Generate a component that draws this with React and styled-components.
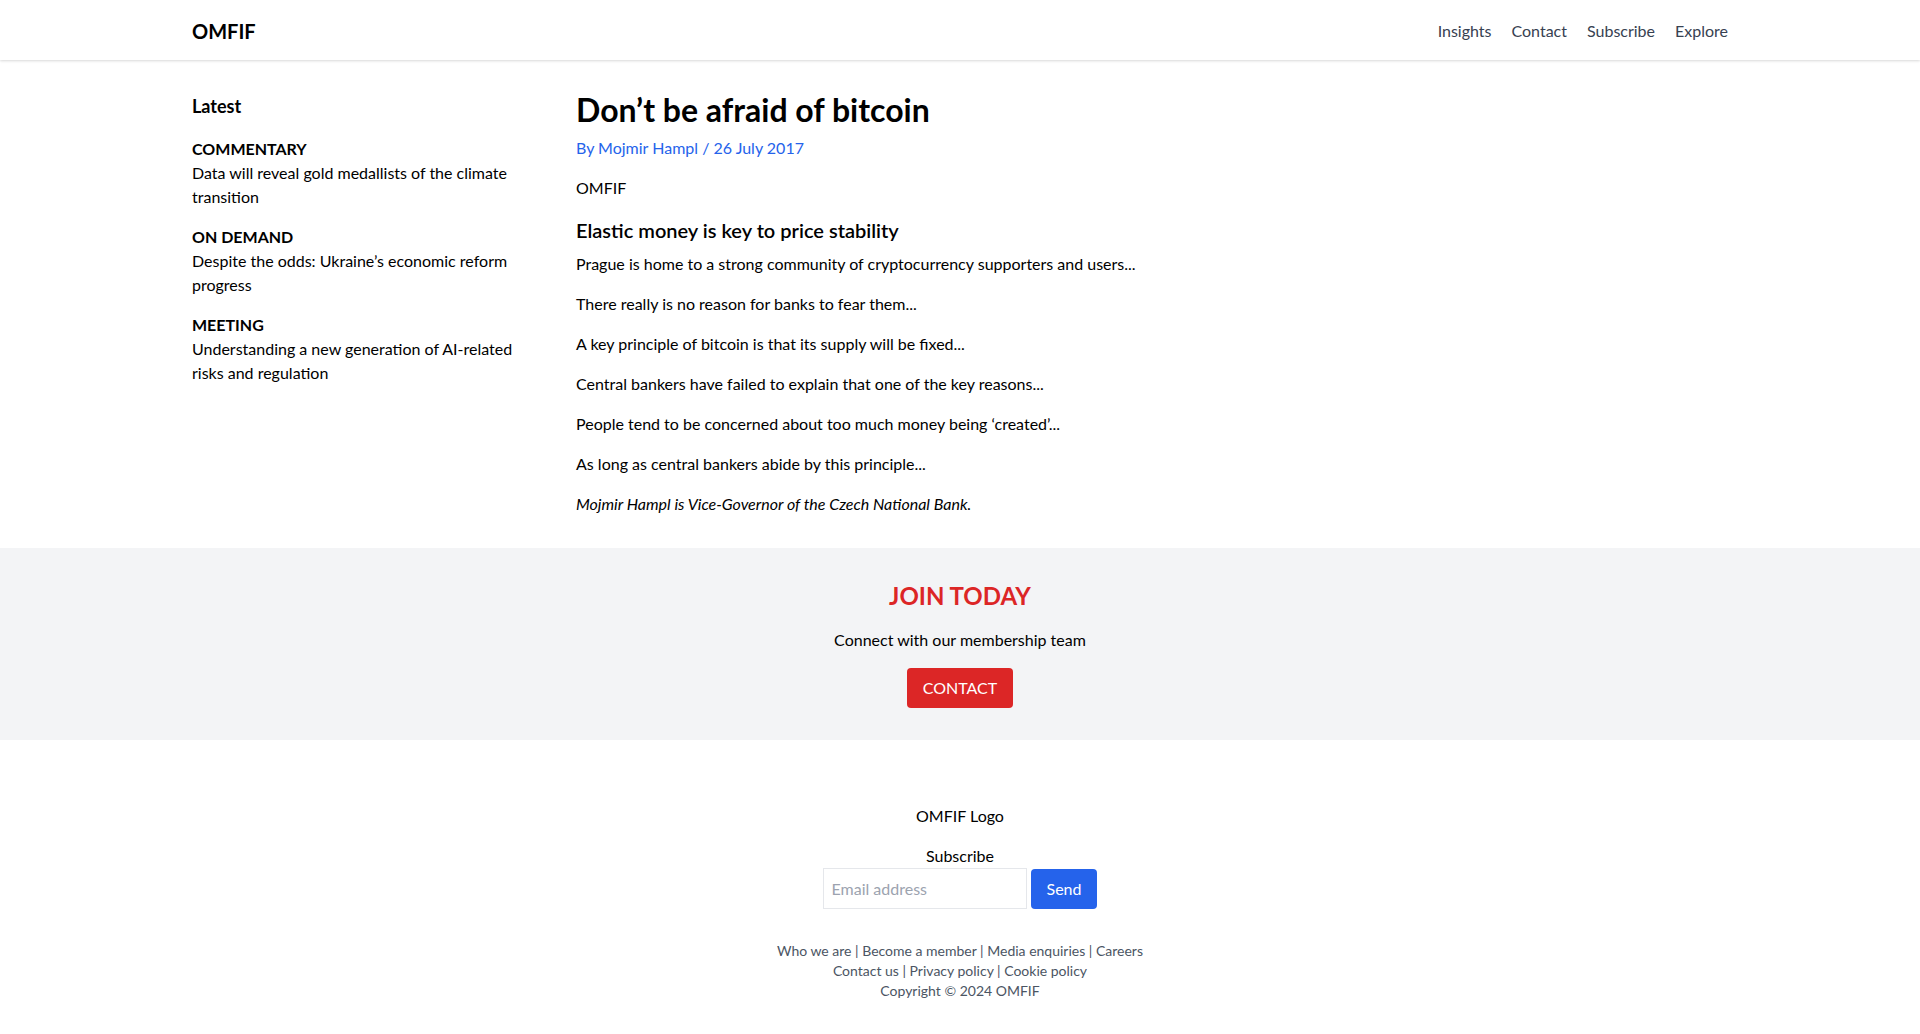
import React from "react";
import styled, { createGlobalStyle } from "styled-components";

const Global = createGlobalStyle`
  * { box-sizing: border-box; }
  html, body { margin: 0; padding: 0; background: #fff; }
  body {
    font-family: Lato, "Segoe UI", "Noto Sans", sans-serif;
    font-size: 16px;
    line-height: 24px;
    color: #000;
  }
  h1, h2, h3, p { margin: 0; }
`;

const Header = styled.header`
  height: 60px;
  background: #fff;
  box-shadow: 0 1px 3px rgba(0, 0, 0, 0.1), 0 1px 2px rgba(0, 0, 0, 0.06);
  position: relative;
  z-index: 1;
`;

const Container = styled.div`
  max-width: 1536px;
  margin: 0 auto;
`;

const HeaderInner = styled(Container)`
  height: 100%;
  display: flex;
  align-items: center;
  justify-content: space-between;
  padding-top: 2px;
`;

const Logo = styled.div`
  font-size: 20px;
  line-height: 28px;
  font-weight: 700;
  color: #000;
`;

const Nav = styled.nav`
  display: flex;
  gap: 20px;
`;

const NavLink = styled.a`
  color: #374151;
  text-decoration: none;
  font-size: 16px;
  line-height: 24px;
`;

const Main = styled(Container)`
  display: grid;
  grid-template-columns: 384px 1fr;
  padding: 32px 0;
`;

const Sidebar = styled.aside`
  padding-right: 32px;
`;

const SideTitle = styled.h2`
  font-size: 18px;
  line-height: 28px;
  font-weight: 700;
  margin-bottom: 17px;
`;

const SideItem = styled.div`
  margin-bottom: 16px;
`;

const SideLabel = styled.div`
  font-weight: 700;
  text-transform: uppercase;
`;

const SideText = styled.div``;

const Article = styled.article``;

const Title = styled.h1`
  font-size: 32px;
  line-height: 36px;
  font-weight: 700;
`;

const Byline = styled.p`
  color: #2563eb;
  margin-top: 8px;
`;

const Source = styled.p`
  margin-top: 16px;
`;

const SubHead = styled.h2`
  font-size: 20px;
  line-height: 28px;
  font-weight: 600;
  margin-top: 16px;
  margin-bottom: 8px;
`;

const Para = styled.p`
  margin-bottom: 16px;
  font-style: ${(p) => (p.$italic ? "italic" : "normal")};
  &:last-child { margin-bottom: 0; }
`;

const Join = styled.section`
  background: #f3f4f6;
  padding: 32px 0;
  text-align: center;
`;

const JoinTitle = styled.h2`
  color: #dc2626;
  font-size: 24px;
  line-height: 32px;
  font-weight: 700;
`;

const JoinText = styled.p`
  margin: 16px 0;
`;

const Button = styled.button`
  font-family: inherit;
  font-size: 16px;
  line-height: 24px;
  color: #fff;
  background: ${(p) => p.$bg};
  border: none;
  border-radius: 4px;
  padding: 8px 16px;
  height: 40px;
  cursor: pointer;
`;

const Footer = styled.footer`
  padding: 64px 0;
  text-align: center;
`;

const FooterLogo = styled.p`
  margin-bottom: 16px;
`;

const Form = styled.form`
  display: flex;
  justify-content: center;
  align-items: center;
  gap: 4px;
`;

const Input = styled.input`
  font-family: inherit;
  font-size: 16px;
  line-height: 24px;
  width: 204px;
  height: 41px;
  padding: 8px;
  border: 1px solid #e5e7eb;
  outline: none;
  color: #000;
  &::placeholder { color: #9ca3af; }
`;

const Links = styled.div`
  margin-top: 32px;
  font-size: 14px;
  line-height: 20px;
  color: #4b5563;
`;

const FootLink = styled.a`
  color: #4b5563;
  text-decoration: none;
`;

const latest = [
  { label: "Commentary", text: "Data will reveal gold medallists of the climate transition" },
  { label: "On Demand", text: "Despite the odds: Ukraine’s economic reform progress" },
  { label: "Meeting", text: "Understanding a new generation of AI-related risks and regulation" },
];

const paras = [
  "Prague is home to a strong community of cryptocurrency supporters and users...",
  "There really is no reason for banks to fear them...",
  "A key principle of bitcoin is that its supply will be fixed...",
  "Central bankers have failed to explain that one of the key reasons...",
  "People tend to be concerned about too much money being ‘created’...",
  "As long as central bankers abide by this principle...",
];

const row1 = ["Who we are", "Become a member", "Media enquiries", "Careers"];
const row2 = ["Contact us", "Privacy policy", "Cookie policy"];

const LinkRow = ({ items }) => (
  <div>
    {items.map((t, i) => (
      <React.Fragment key={t}>
        {i > 0 && " | "}
        <FootLink href="#">{t}</FootLink>
      </React.Fragment>
    ))}
  </div>
);

export default function App() {
  return (
    <>
      <Global />
      <Header>
        <HeaderInner>
          <Logo>OMFIF</Logo>
          <Nav>
            <NavLink href="#">Insights</NavLink>
            <NavLink href="#">Contact</NavLink>
            <NavLink href="#">Subscribe</NavLink>
            <NavLink href="#">Explore</NavLink>
          </Nav>
        </HeaderInner>
      </Header>
      <Main>
        <Sidebar>
          <SideTitle>Latest</SideTitle>
          {latest.map((l) => (
            <SideItem key={l.label}>
              <SideLabel>{l.label}</SideLabel>
              <SideText>{l.text}</SideText>
            </SideItem>
          ))}
        </Sidebar>
        <Article>
          <Title>Don’t be afraid of bitcoin</Title>
          <Byline>By Mojmir Hampl / 26 July 2017</Byline>
          <Source>OMFIF</Source>
          <SubHead>Elastic money is key to price stability</SubHead>
          {paras.map((p) => (
            <Para key={p}>{p}</Para>
          ))}
          <Para $italic>Mojmir Hampl is Vice-Governor of the Czech National Bank.</Para>
        </Article>
      </Main>
      <Join>
        <JoinTitle>JOIN TODAY</JoinTitle>
        <JoinText>Connect with our membership team</JoinText>
        <Button $bg="#dc2626">CONTACT</Button>
      </Join>
      <Footer>
        <FooterLogo>OMFIF Logo</FooterLogo>
        <p>Subscribe</p>
        <Form onSubmit={(e) => e.preventDefault()}>
          <Input type="email" placeholder="Email address" />
          <Button $bg="#2563eb" type="submit">Send</Button>
        </Form>
        <Links>
          <LinkRow items={row1} />
          <LinkRow items={row2} />
          <div>Copyright © 2024 OMFIF</div>
        </Links>
      </Footer>
    </>
  );
}
